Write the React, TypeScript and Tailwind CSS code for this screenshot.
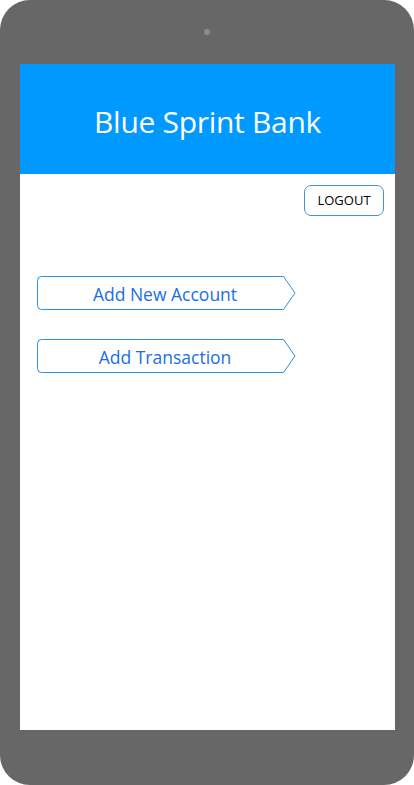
import React from 'react';

const font = { fontFamily: '"Open Sans", "Noto Sans", "Liberation Sans", sans-serif' };

function ArrowButton({ label }: { label: string }) {
  return (
    <button className="relative w-[259px] h-[34px] flex items-center text-[17.5px] text-[#1a6fe0]">
      {/* outline shape */}
      <svg className="absolute inset-0" width="259" height="34" viewBox="0 0 259 34" fill="none">
        <path
          d="M4.5 0.5 H246.5 L258 17 L246.5 33.5 H4.5 Q0.5 33.5 0.5 29.5 V4.5 Q0.5 0.5 4.5 0.5 Z"
          stroke="#2a8fe0"
          strokeWidth="1"
        />
      </svg>
      <span className="relative w-[258px] pr-[2px] pt-[3px] text-center leading-none">{label}</span>
    </button>
  );
}

export default function App() {
  return (
    <div className="w-[414px] h-[785px] bg-white" style={font}>
      <div className="w-full h-full bg-[#676767] rounded-[30px] flex flex-col items-center">
        {/* camera */}
        <div className="mt-[29px] w-[6px] h-[6px] rounded-full bg-[#8c8c8c]"></div>

        <div className="mt-[29px] ml-[1px] w-[375px] h-[666px] bg-white flex flex-col">
          <header className="h-[110px] bg-[#0099ff] flex items-center justify-center">
            <h1 className="text-[30px] text-white font-normal tracking-[-0.3px] pt-[4px]">Blue Sprint Bank</h1>
          </header>

          <div className="flex justify-end pr-[11px] pt-[11px]">
            <button className="w-[80px] h-[31px] rounded-[7px] border border-[#3a97d6] text-[13px] text-black">
              LOGOUT
            </button>
          </div>

          <div className="flex flex-col gap-[29px] pl-[17px] pt-[60px]">
            <ArrowButton label="Add New Account" />
            <ArrowButton label="Add Transaction" />
          </div>
        </div>
      </div>
    </div>
  );
}
